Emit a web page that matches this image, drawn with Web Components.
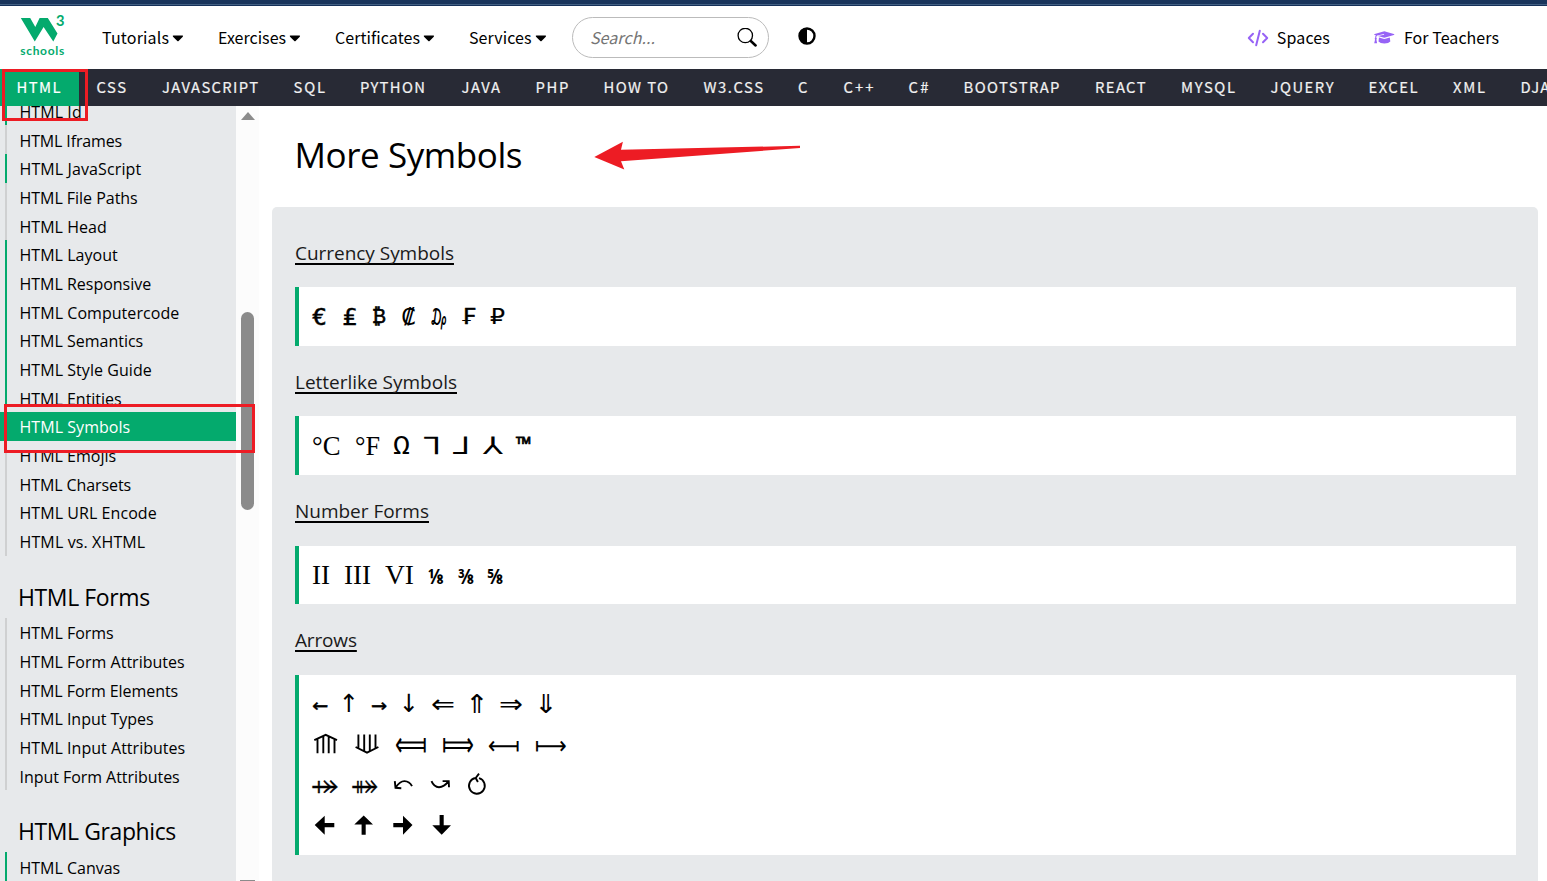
<!DOCTYPE html>
<html lang="en">
<head>
<meta charset="utf-8">
<title>HTML Symbols</title>
<style>
html,body{margin:0;height:100%;overflow:hidden;background:#fff;color:#000}
body{font-family:"Open Sans","Noto Sans",sans-serif}
</style>
</head>
<body>
<w3-page></w3-page>
<script>
const define=(name,html,init)=>{
  const t=document.createElement('template');t.innerHTML=html;
  customElements.define(name,class extends HTMLElement{
    connectedCallback(){
      if(this.shadowRoot)return;
      this.attachShadow({mode:'open'}).append(t.content.cloneNode(true));
      if(init)init.call(this,this.shadowRoot);
    }
  });
};

/* Tracks its text so that the line takes exactly the width in "w". */
define('fit-text','<style>:host{display:inline-block;white-space:nowrap}</style><slot></slot>',function(){
  const w=+this.getAttribute('w');if(!w)return;
  this.style.letterSpacing='0px';
  const n=[...this.textContent].length;
  const d=(w-this.getBoundingClientRect().width)/Math.max(1,n-1);
  this.style.letterSpacing=d.toFixed(3)+'px';
});

define('w3-logo',`<style>:host{display:block;width:46px;height:46px}svg{display:block;overflow:visible}text{font-family:Lato,sans-serif;fill:#04aa6d;font-weight:700}</style>
<svg width="46" height="46" viewBox="0 0 46 46"><path fill="#04aa6d" d="M.8 4H10.2L15.3 13 19.6 4H27.8L37.5 19.4 33.3 27.6 23.6 13 14.8 27.6Z"/>
<text x="36" y="11.5" font-size="16" textLength="8.5" lengthAdjust="spacingAndGlyphs" font-weight="900">3</text><text x=".2" y="41.2" font-size="12" textLength="44" lengthAdjust="spacing">schools</text></svg>`);

define('menu-item',`<style>:host{display:flex;align-items:center;gap:3px;box-sizing:border-box;font-size:16px;line-height:24px}svg{display:block;margin-top:4px}</style>
<slot></slot><svg width="12" height="7" viewBox="0 0 12 7"><path d="M1.5 .6H10.3Q11.6 .6 10.8 1.7L6.6 5.9Q6 6.5 5.3 5.9L1 1.7Q.2 .6 1.5 .6Z"/></svg>`);

define('search-box',`<style>:host{display:flex;align-items:center;justify-content:space-between;box-sizing:border-box;width:197px;height:41px;border:1px solid #bbb;border-radius:21px;padding:0 11px 0 17px;font-size:16px;font-style:italic;color:#757575}svg{display:block}fit-text{margin-top:-2px}</style>
<fit-text w="65">Search...</fit-text><svg width="20" height="20" viewBox="0 0 20 20" fill="none" stroke="#000"><circle cx="8.3" cy="7.5" r="7.2" stroke-width="1.3"/><path d="M13.8 13L18.6 17.5" stroke-width="2.5" stroke-linecap="round"/></svg>`);

define('w3-header',`<style>:host{display:block;font-family:"Noto Sans CJK SC",sans-serif}
.strip{height:6px;box-sizing:border-box;background:linear-gradient(#19355c 0 4px,#426083 4px 5px,#15315a 5px)}
.bar{display:flex;height:63px;box-sizing:border-box;padding-left:20px;align-items:center}
menu-item{height:30px;margin-top:-2px}w3-logo{margin-top:-1px;width:82px}
.half{margin-left:29px}.half svg{display:block;margin-top:-3px}
.right{margin-left:auto;display:flex;align-items:center;padding-right:48px;font-size:16px;line-height:24px}
.right svg{display:block}.right>svg:first-child{margin-right:8px}.right>fit-text{margin-top:-2px}.cap{margin:0 9px 0 44px}</style>
<div class="strip"></div><div class="bar"><w3-logo></w3-logo>
<menu-item style="width:116px"><fit-text w="67">Tutorials</fit-text></menu-item>
<menu-item style="width:117px"><fit-text w="68">Exercises</fit-text></menu-item>
<menu-item style="width:134px"><fit-text w="85">Certificates</fit-text></menu-item>
<menu-item style="width:103px"><fit-text w="62.5">Services</fit-text></menu-item>
<search-box></search-box>
<span class="half"><svg width="18" height="18" viewBox="0 0 18 18"><circle cx="9" cy="9" r="7.5" fill="#fff" stroke="#000" stroke-width="2.4"/><path d="M9 1A8 8 0 0 0 9 17Z"/></svg></span>
<div class="right"><svg width="22" height="18" viewBox="0 0 22 18" fill="none" stroke="#9763f6" stroke-width="2" stroke-linecap="round" stroke-linejoin="round"><path d="M6 4.7L1.8 9 6 13.2M16 4.7L20.2 9 16 13.2M12.8 1.8L9.2 16.2" /></svg><fit-text w="53">Spaces</fit-text>
<svg class="cap" width="21" height="16" viewBox="0 0 21 16" fill="#9763f6"><path d="M10.3 1.2L19.8 4Q21 4.4 19.8 4.9L11.3 7.5Q10.3 7.8 9.3 7.5L4 5.9 10.2 4.7 10 4.1 3.2 5.4Q2.2 6 2.3 7.7 3.3 8.5 2.4 9.5L3.1 13.2H.2L1.1 9.5Q.3 8.6 1.2 7.7 1.1 6 2 5.3L.7 4.9Q-.4 4.5 .7 4Z"/><path d="M5 7.5L9.3 8.8Q10.3 9.1 11.3 8.8L15.8 7.5 16.3 11.5Q14.7 13.4 10.4 13.4 6.1 13.4 4.5 11.5Z"/></svg><fit-text w="95">For Teachers</fit-text></div></div>`);

define('topic-nav',`<style>:host{display:flex;height:37px;background:#282a35;color:#f1f1f1;overflow:hidden;font:400 14.8px/35px "Noto Sans CJK SC",sans-serif;-webkit-text-stroke:.2px}
span{flex:none;box-sizing:border-box;height:37px}.on{background:#04aa6d;color:#fff;padding-left:16.5px;width:79px;margin-right:17.5px}</style>`,function(r){
  const a=[['HTML',17,44],['CSS',96.5,29.5],['JAVASCRIPT',162,96],['SQL',293.5,31.5],['PYTHON',360,65],['JAVA',461.5,38.5],['PHP',535.5,33],['HOW TO',603.5,64.5],['W3.CSS',703.5,59.5],['C',798,11],['C++',843.5,30],['C#',908.5,20],['BOOTSTRAP',963.5,96],['REACT',1095,50.5],['MYSQL',1181,54],['JQUERY',1270.5,63],['EXCEL',1368.5,49],['XML',1453,32],['DJANGO',1520.5,64]];
  a.forEach(([t,x,w],i)=>{
    const s=document.createElement('span');
    if(i)s.style.width=((a[i+1]?a[i+1][1]:1600)-x)+'px';else s.className='on';
    s.innerHTML='<fit-text w="'+w+'">'+t+'</fit-text>';r.append(s);
  });
});

define('side-link',`<style>:host{display:flex;align-items:center;box-sizing:border-box;height:28.7px;margin-left:5px;padding-left:12.5px;border-left:2px solid #cfd0d1;font-size:16px;line-height:26px;padding-top:2px}
:host([done]){border-color:#04aa6d}:host([active]){margin-left:0;padding-left:19.5px;border:0;background:#04aa6d;color:#fff}</style><slot></slot>`);

define('side-menu',`<style>:host{display:flex;width:259px;height:775px;overflow:hidden;background:#fcfcfc;flex:none}
.list{width:236px;background:#e7e9eb}.list>:first-child{margin-top:-9.5px}
h2{margin:0;height:62.4px;box-sizing:border-box;padding:23px 0 0 18px;font-size:23px;font-weight:400;line-height:36px}
.rail{width:23px;display:flex;flex-direction:column;align-items:center}
.up{border:7.5px solid transparent;border-top:0;border-bottom:8px solid #8b8b8b;margin-top:6px}
.thumb{width:13px;height:198px;border-radius:7px;background:#8b8b8b;margin-top:192px}
.down{width:15px;height:1px;background:#8b8b8b;margin-top:auto}</style>
<div class="list"></div><div class="rail"><div class="up"></div><div class="thumb"></div><div class="down"></div></div>`,function(r){
  const rows=[['HTML Id',63,1],['HTML Iframes',103.5],['HTML JavaScript',122.5,1],['HTML File Paths',119],['HTML Head',88],['HTML Layout',99,1],['HTML Responsive',132.5,1],['HTML Computercode',160.5,1],['HTML Semantics',124.5,1],['HTML Style Guide',133,1],['HTML Entities',103,1],['HTML Symbols',111.5,2],['HTML Emojis',97.5],['HTML Charsets',112.5],['HTML URL Encode',138],['HTML vs. XHTML',126.5],
  ['HTML Forms',133,'h'],['HTML Forms',95],['HTML Form Attributes',166],['HTML Form Elements',159.5],['HTML Input Types',135],['HTML Input Attributes',166.5],['Input Form Attributes',161],['HTML Graphics',159,'h'],['HTML Canvas',101.5,1]];
  r.querySelector('.list').innerHTML=rows.map(([t,w,k])=>{
    const f='<fit-text w="'+(w-.8)+'">'+t+'</fit-text>';
    return k==='h'?'<h2>'+f+'</h2>':'<side-link'+(k===1?' done':k===2?' active':'')+'>'+f+'</side-link>';
  }).join('');
});

/* Arrow shapes: [view box top, stroke path, fill path]. */
const shapes={
  '⟰':[724.4,'M314.3 740.6L325.7 735.2 337 740.6M317.5 739.2V753.7M323.3 736.6V753.7M328.7 736.6V753.7M334.5 739.2V753.7'],
  '⟱':[724.4,'M355.6 747.4L367 753 378.4 747.4M358.4 735V748.8M364.2 735V751.6M369.8 735V751.6M375.5 735V748.8'],
  '⤺':[764.8,'M394.8 781L395.5 787.6 401.3 788M395.7 787.3Q400 780.8 404.5 780.9 409.5 781 412 786'],
  '⤻':[764.8,'M431.5 781Q434 787 439 787 444 787 448.6 781M442.6 780.9L448.7 780.9 449 787'],
  '⥀':[764.8,'M479 773.5L475.7 777.8 477.9 781.8M475.7 777.8A7.9 7.9 0 1 0 479 778'],
  '🡄':[805.2,'','M314.7 825.3L324.7 816V823.3H334.3V827.4H324.7V835Z'],
  '🡅':[805.2,'','M363.7 815.7L373 824.7H365.7V835H361.6V824.7H354.3Z'],
  '🡆':[805.2,'','M412.5 825.3L403 816V823.3H393.3V827.4H403V835Z'],
  '🡇':[805.2,'','M441.7 835L451 825.4H443.7V815.3H439.6V825.4H432.3Z']
};

/* One glyph in a cell: [glyph, left, width, font, size, baseline shift, stroke, vertical stretch, weight]. */
define('symbol-row',`<style>:host{display:flex;height:40.4px;align-items:center}span{flex:none;white-space:nowrap;line-height:40px;height:40.4px}b{display:inline-block;font-weight:400;transform-origin:0 50%}svg{display:block;overflow:visible}</style>`,function(r){
  const fonts={m:'"DejaVu Sans Mono"',d:'"DejaVu Sans"',s:'"Liberation Serif"',o:'"Open Sans"'};
  JSON.parse(this.getAttribute('items')).forEach(([g,x,w,f,size,dy,st,sy,wt],i,a)=>{
    const s=document.createElement('span');
    s.style.width=((a[i+1]?a[i+1][1]:x+60)-x)+'px';
    if(!i)s.style.marginLeft=(x-312)+'px';
    r.append(s);
    const p=shapes[g];
    if(p){
      s.innerHTML='<svg role="img" aria-label="'+g+'" width="'+w+'" height="40.4" viewBox="'+x+' '+p[0]+' '+w+' 40.4"><path fill="none" stroke="#000" stroke-width="1.9" d="'+p[1]+'"/><path d="'+(p[2]||'')+'"/></svg>';
      return;
    }
    const b=document.createElement('b');
    b.textContent=g;b.style.font=(wt||400)+' '+size+'px/40px '+fonts[f]+',"DejaVu Sans",sans-serif';
    if(st)b.style.webkitTextStroke=st+'px #000';
    s.append(b);
    b.style.transform='translateY('+(dy||0)+'px) scale('+(w/b.getBoundingClientRect().width).toFixed(3)+','+(sy||1)+')';
  });
});

define('symbol-group',`<style>:host{display:block;padding:0 22px 0 23px}h3{margin:0;height:28px;font-size:19px;font-weight:400;line-height:26px;color:#1a1a1a}
::slotted([slot=title]){text-decoration:underline 2px #000;text-underline-offset:3px;text-decoration-skip-ink:none}
.box{box-sizing:border-box;margin-top:19.7px;background:#fff;border-left:4px solid #04aa6d;padding:9px 0 9px 13px}</style><h3><slot name="title"></slot></h3><div class="box"><slot></slot></div>`);

define('main-content',`<style>:host{display:block;flex:1;padding:0 9px 0 13px;min-width:0}
h1{margin:0;height:101px;box-sizing:border-box;padding:24px 0 0 22.5px;font-size:35px;line-height:50px;font-weight:400}
.panel{background:#e7e9eb;border-radius:5px;height:690px;padding-top:32.5px;box-sizing:border-box}symbol-group{margin-bottom:23.2px}</style>
<h1><fit-text w="228">More Symbols</fit-text></h1><div class="panel">
<symbol-group><fit-text slot="title" w="159">Currency Symbols</fit-text>
<symbol-row items='[["€",312,15,"m",23,1,0.5],["₤",342,15,"m",23,1,0.3],["₿",372,14,"d",21,0,0.7],["₡",401,15,"m",23,1],["₯",430,17,"d",23,1],["₣",461,15,"d",22,1,0.5],["₽",490,15,"d",22,1,0.2]]'></symbol-row></symbol-group>
<symbol-group><fit-text slot="title" w="162">Letterlike Symbols</fit-text>
<symbol-row items='[["°C",312,28.5,"s",27,1],["°F",355,25,"s",27,1],["Ω",393,17,"m",24,1],["⅂",424,17,"d",24,1],["⅃",453,17,"d",24,1],["⅄",483,20,"d",24,1],["™",516,16,"o",20,-1,0.7]]'></symbol-row></symbol-group>
<symbol-group><fit-text slot="title" w="134">Number Forms</fit-text>
<symbol-row items='[["II",312,18,"s",27],["III",344,27,"s",27],["VI",385,29,"s",27],["⅛",428,16,"o",22,0,0,1,700],["⅜",457.5,16,"o",22,0,0,1,700],["⅝",487,16,"o",22,0,0,1,700]]'></symbol-row></symbol-group>
<symbol-group><fit-text slot="title" w="62">Arrows</fit-text>
<symbol-row items='[["←",312,16,"m",24,1,0.3],["↑",339,20,"d",25],["→",371,16,"m",24,1,0.3],["↓",399,20,"d",25],["⇐",431,24,"d",26],["⇑",465,24,"d",26],["⇒",499,24,"d",26],["⇓",534,24,"d",26]]'></symbol-row>
<symbol-row items='[["⟰",312,26],["⟱",353,26],["⟽",395,32,"d",25,1,0,1.4],["⟾",441.5,32,"d",25,1,0,1.4],["⟻",488,32,"d",25,2],["⟼",535,32,"d",25,2]]'></symbol-row>
<symbol-row items='[["⤀",312,26,"d",24,0,0.4],["⤁",352,26,"d",24,0,0.4],["⤺",392,22],["⤻",429,22],["⥀",466,20]]'></symbol-row>
<symbol-row items='[["🡄",313,22],["🡅",352,22],["🡆",391,22],["🡇",430,22]]'></symbol-row></symbol-group></div>`);

/* Hand-drawn marks laid over the page. */
define('mark-layer',`<style>:host{position:absolute;left:0;top:0;pointer-events:none}svg{display:block}</style>
<svg width="1547" height="881" fill="none" stroke="#ed1c24" stroke-width="3"><rect x="3.5" y="70.5" width="83" height="49"/><rect x="5.5" y="405.5" width="248" height="46"/><path stroke="none" fill="#ed1c24" d="M594.3 157L622.9 141.7 621 149.7 800 145.8V148L621 161.3 624.3 169.4Z"/></svg>`);

define('w3-page',`<style>:host{display:block;position:relative;width:1547px;height:881px;overflow:hidden}.body{display:flex;height:775px;overflow:hidden}</style>
<w3-header></w3-header><topic-nav></topic-nav><div class="body"><side-menu></side-menu><main-content></main-content></div><mark-layer></mark-layer>`);
</script>
</body>
</html>
